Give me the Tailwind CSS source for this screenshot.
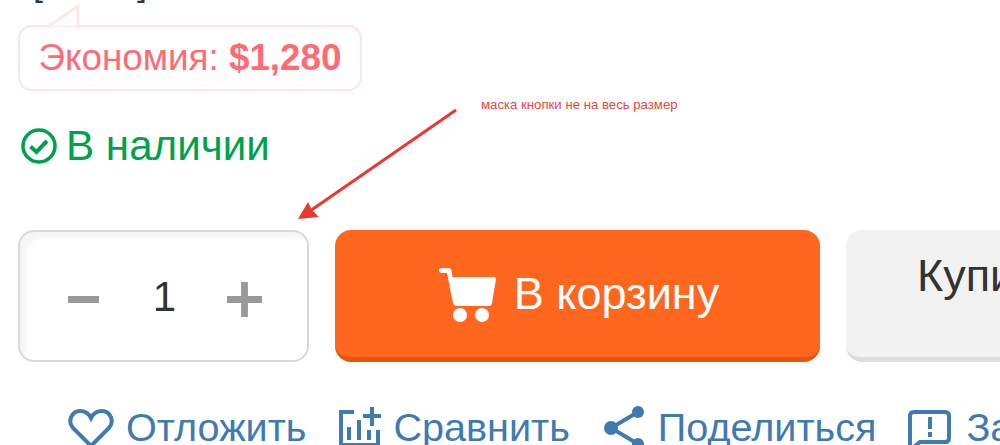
<!DOCTYPE html>
<html lang="ru">
<head>
    <meta charset="UTF-8">
    <title>Товар</title>
    <script src="https://cdn.jsdelivr.net/npm/@tailwindcss/browser@4"></script>
</head>
<body class="bg-white">
    <div class="relative w-[1000px] h-[445px] overflow-hidden font-['Liberation_Sans',Arial,sans-serif]">
        <!-- cut off text row at the very top -->
        <div class="absolute left-[33px] -top-[37px] w-[114px] flex justify-between text-[36px] leading-[40px] text-[#333]"><span>[</span><span>]</span></div>

        <div class="pl-[18px] pt-[25px] flex flex-col items-start">
            <!-- savings badge -->
            <div class="relative w-[344px] h-[66px] border-2 border-[#ffe3e5] rounded-[14px] flex items-center justify-center text-[36.8px] text-[#ff6b74]">
                <svg class="absolute left-[28px] -top-[24px]" width="34" height="24" viewBox="0 0 34 24">
                    <path d="M1 23 L30 3 V23" fill="#fff" stroke="#ffe3e5" stroke-width="2.500"/>
                </svg>
                <span>Экономия:&nbsp;<b class="font-bold">$1,280</b></span>
            </div>

            <!-- stock -->
            <div class="mt-[30px] h-[50px] flex items-center gap-[9px] pl-[3px] text-[42.2px] text-[#00a14b]">
                <svg width="36" height="36" viewBox="0 0 36 36" fill="none" stroke="#00a14b" stroke-width="3.500">
                    <circle cx="18" cy="18" r="16"/>
                    <path d="M9.500 18.500 L15.500 24 L26 13" stroke-width="4"/>
                </svg>
                <span>В наличии</span>
            </div>

            <!-- buy row -->
            <div class="mt-[59px] flex gap-[26px]">
                <div class="w-[291px] h-[132px] border-2 border-[#d8d8d8] rounded-[16px] shadow-[inset_7px_7px_5px_-1px_#f5f5f5] flex items-center justify-between pl-[48px] pr-[45px]">
                    <span class="block mt-[6px] w-[31px] h-[7px] bg-[#999]"></span>
                    <span class="ml-[3px] text-[42px] text-[#333]">1</span>
                    <svg class="mt-[6px]" width="35" height="35" viewBox="0 0 36 36" fill="#999"><path d="M14.500 0h7v14.500H36v7H21.500V36h-7V21.500H0v-7h14.500z"/></svg>
                </div>
                <div class="w-[485px] h-[132px] pl-[3px] rounded-[16px] bg-[#ff671f] border-b-[5px] border-[#e5560c] flex items-center justify-center gap-[17px] text-white text-[45px]">
                    <svg class="mt-[3px]" width="58" height="56" viewBox="0 0 58 56" fill="#fff">
                        <path d="M2.500 1H9C11 1 12 2 12.500 3.500L13.500 10H55C56.500 10 57.200 11 57 12L53 36C52.700 38 51.500 39 50 39H18C16 39 14.500 38 14 36L8 6H2.500C1 6 0 5 0 3.500S1 1 2.500 1Z"/>
                        <circle cx="21" cy="48" r="7"/>
                        <circle cx="43" cy="48" r="7"/>
                    </svg>
                    <span>В корзину</span>
                </div>
                <div class="w-[300px] h-[132px] rounded-[16px] bg-[#f2f2f2] border-b-[5px] border-[#dddddd] pl-[71px] pt-[12px] text-[45px] text-[#333]">Купить</div>
            </div>

            <!-- actions -->
            <div class="mt-[36px] pl-[50px] flex items-center gap-[33px] text-[39.6px] text-[#3f7ab0] whitespace-nowrap">
                <div class="flex items-center gap-[12px]">
                    <svg width="46" height="40" viewBox="0 0 46 40" fill="none" stroke="#3f7ab0" stroke-width="4">
                        <path d="M23 38 L5 20 C-1 13 4 3 12 3 C17 3 21 6 23 10 C25 6 29 3 34 3 C42 3 47 13 41 20 Z"/>
                    </svg>
                    <span>Отложить</span>
                </div>
                <div class="flex items-center gap-[12px]">
                    <svg width="42" height="42" viewBox="0 0 42 42" fill="none" stroke="#3f7ab0" stroke-width="4">
                        <path d="M15 5H2V38H39V23"/>
                        <path d="M10 33V20M20 33V13M30 33V23"/>
                        <path d="M33 0V19M24 9H42"/>
                    </svg>
                    <span>Сравнить</span>
                </div>
                <div class="ml-[1px] flex items-center gap-[13px]">
                    <svg width="41" height="46" viewBox="0 0 41 46" fill="#3f7ab0">
                        <circle cx="34" cy="7" r="6"/>
                        <circle cx="7" cy="23" r="7"/>
                        <circle cx="34" cy="39" r="6"/>
                        <path d="M34 7L7 23L34 39" fill="none" stroke="#3f7ab0" stroke-width="4"/>
                    </svg>
                    <span>Поделиться</span>
                </div>
                <div class="-ml-[1px] flex items-center gap-[15px]">
                    <svg width="43" height="44" viewBox="0 0 43 44" fill="none" stroke="#3f7ab0" stroke-width="4">
                        <path d="M6 6H37C39.500 6 41 7.500 41 10V32C41 34.500 39.500 36 37 36H12L2 44V10C2 7.500 3.500 6 6 6Z"/>
                        <path d="M22 11V23M22 26V31"/>
                    </svg>
                    <span>Задать вопрос</span>
                </div>
            </div>
        </div>

        <!-- annotation drawn over the page -->
        <div class="absolute left-[481px] top-[97px] text-[13.2px] leading-[16px] text-[#e9443a]">маска кнопки не на весь размер</div>
        <svg class="absolute left-0 top-0 pointer-events-none" width="1000" height="445" fill="#e8392e">
            <path d="M456 110 L310 211" stroke="#e8392e" stroke-width="3"/>
            <path d="M298 219 L308 202 L312 210 L319 217 Z"/>
        </svg>
    </div>
</body>
</html>
